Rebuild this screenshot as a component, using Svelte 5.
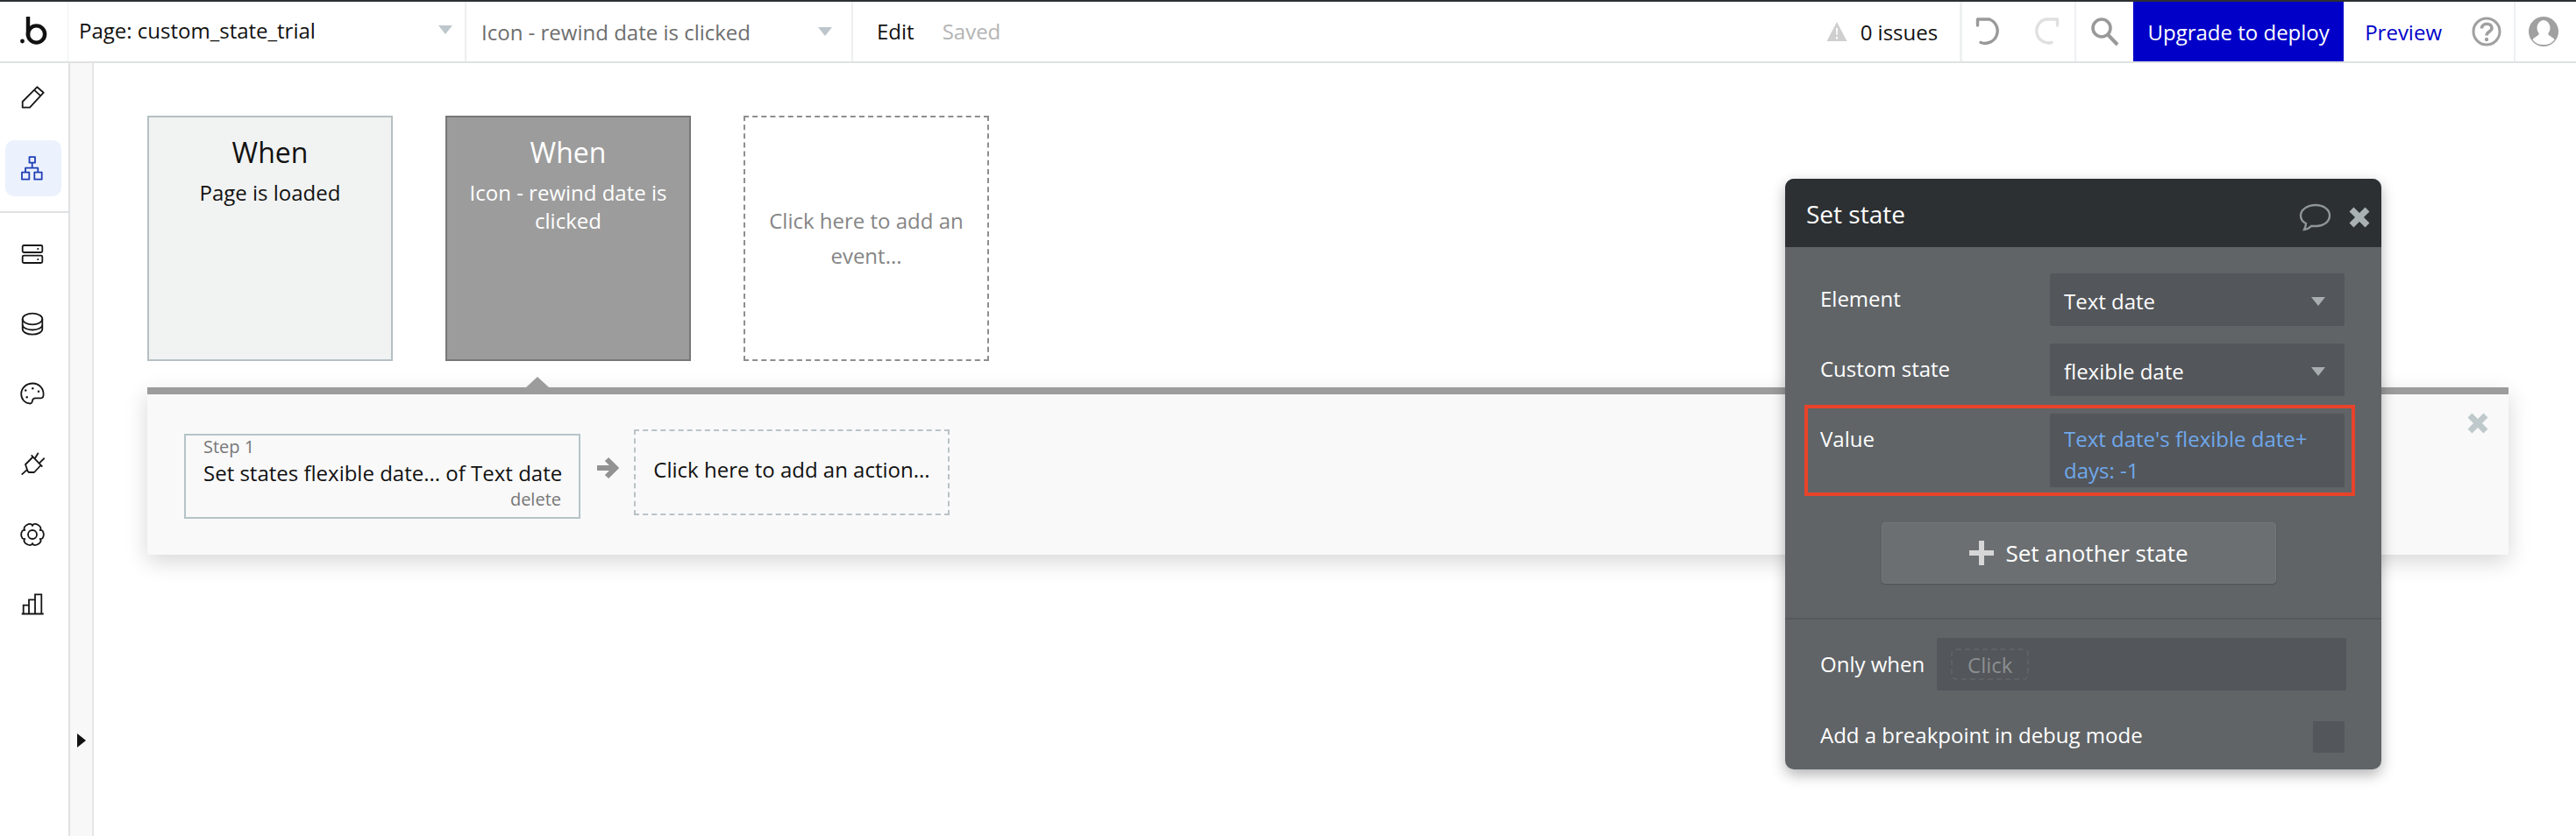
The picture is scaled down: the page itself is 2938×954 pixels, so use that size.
<script>
  const cards = [
    { title: 'When', text: 'Page is loaded', kind: 'plain' },
    { title: 'When', text: 'Icon - rewind date is clicked', kind: 'active' }
  ];
  const fields = [
    { label: 'Element', value: 'Text date' },
    { label: 'Custom state', value: 'flexible date' }
  ];

  // six lobed outline for the settings icon
  function gearPath() {
    const pt = (ang, r) => `${(14 + r * Math.cos(ang)).toFixed(1)} ${(14 + r * Math.sin(ang)).toFixed(1)}`;
    let d = `M${pt(-Math.PI / 6, 10)}`;
    for (let i = 0; i < 6; i++) {
      const a = (i * Math.PI) / 3;
      d += `C${pt(a - 0.42, 15.5)} ${pt(a + 0.42, 15.5)} ${pt(a + Math.PI / 6, 10)}`;
    }
    return d + 'z';
  }
</script>

<div class="app">
  <header class="topbar">
    <div class="logo">
      <svg width="34" height="34" viewBox="0 0 34 34" fill="none">
        <circle cx="3.5" cy="29" r="2.4" fill="#111" />
        <path d="M10 1v22" stroke="#111" stroke-width="4.4" />
        <circle cx="19.5" cy="21" r="9.6" stroke="#111" stroke-width="4.4" />
      </svg>
    </div>
    <div class="drop first">
      <span class="dark">Page: custom_state_trial</span>
      <i class="caret"></i>
    </div>
    <div class="drop second">
      <span>Icon - rewind date is clicked</span>
      <i class="caret"></i>
    </div>
    <div class="edit">
      <span class="dark">Edit</span>
      <span class="saved">Saved</span>
    </div>
    <div class="right">
      <div class="issues">
        <svg width="24" height="24" viewBox="0 0 24 24">
          <path d="M12 1 23.5 23H.5z" fill="#cfcfcf" />
          <path d="M11 8h2l-.3 8h-1.4zM11 18h2v2.5h-2z" fill="#fff" />
        </svg>
        <span class="dark">0 issues</span>
      </div>
      <div class="history">
        <svg width="32" height="34" viewBox="0 0 32 34" fill="none" stroke="#999" stroke-width="3.4">
          <path d="M6 29.5A13.5 13.5 0 1 0 16 3H2.5M2.5 3v7" stroke-linecap="round" />
        </svg>
        <svg width="32" height="34" viewBox="0 0 32 34" fill="none" stroke="#e0e0e0" stroke-width="3.4">
          <path d="M23 29.5A13.5 13.5 0 1 1 16 3h13.5M29.5 3v7" stroke-linecap="round" />
        </svg>
      </div>
      <div class="search">
        <svg width="34" height="36" viewBox="0 0 34 36" fill="none" stroke="#999" stroke-width="3.6">
          <circle cx="13" cy="14" r="10" />
          <path d="m20.5 22 10.5 11" stroke-width="4" />
        </svg>
      </div>
      <div class="upgrade">Upgrade to deploy</div>
      <div class="preview">Preview</div>
      <div class="help">
        <svg width="34" height="34" viewBox="0 0 34 34" fill="none">
          <circle cx="17" cy="17" r="15" stroke="#a0a0a0" stroke-width="3" />
          <path d="M11.5 13.5c0-7 11.5-7 11.5-.5 0 4-6 4-6 8.500" stroke="#a0a0a0" stroke-width="3.6" />
          <circle cx="17" cy="26" r="2.2" fill="#a0a0a0" />
        </svg>
      </div>
      <div class="user">
        <svg width="34" height="34" viewBox="0 0 34 34">
          <circle cx="17" cy="17" r="17" fill="#a0a0a0" />
          <ellipse cx="17" cy="13" rx="7.5" ry="9" fill="#fff" />
          <path d="M12 19c0 3-6 4-7.5 7.5A15.5 15.5 0 0 0 17 32a15.5 15.5 0 0 0 12.5-5.5C28 23 22 22 22 19z" fill="#fff" />
        </svg>
      </div>
    </div>
  </header>

  <div class="main">
    <nav class="sidebar">
      <div class="nav-group">
        <div class="nav-item">
          <svg viewBox="0 0 28 28"><path d="M2.7 25.7V19L19.3 2.3l7.4 6.4L11 25.7zM16 5.7l7.3 6.6" stroke-linejoin="round" /></svg>
        </div>
        <div class="nav-item active">
          <svg viewBox="0 0 28 28"><path d="M10.5 1.2H17v6.500h-6.500zM13.7 7.7v6M6 18.7v-5h14.3v5M2 18.7h8.300v8H2zM16.300 18.7h8.400v8h-8.400z" stroke-linejoin="round" /></svg>
        </div>
      </div>
      <div class="nav-group lower">
        <div class="nav-item">
          <svg viewBox="0 0 28 28"><rect x="2.7" y="4" width="22.6" height="8" rx="1.5" /><rect x="2.7" y="15.7" width="22.6" height="8.3" rx="1.5" /><circle cx="20.3" cy="8" r="1.1" class="dot" /><circle cx="20.3" cy="20" r="1.1" class="dot" /></svg>
        </div>
        <div class="nav-item">
          <svg viewBox="0 0 28 28"><ellipse cx="14" cy="8" rx="11.3" ry="6.3" /><path d="M2.7 8v11.5c0 3.5 5 6.2 11.3 6.2s11.3-2.700 11.3-6.200V8M2.700 14.500c0 3.500 5 6 11.300 6s11.300-2.500 11.300-6" /></svg>
        </div>
        <div class="nav-item">
          <svg viewBox="0 0 28 28"><path d="M14.3 1.5C7 1.5 1.2 6.800 1.2 13.500c0 6 4.300 11 10.300 11 2 0 2.200-1.500 2.400-3 .2-2 1.200-3.200 3.800-3.200h6c2 0 2.900-1.500 2.900-4.300C26.600 7 21.500 1.500 14.300 1.500z" /><circle cx="7.7" cy="17.3" r="1.2" class="dot" /><circle cx="6.2" cy="9.5" r="1.2" class="dot" /><circle cx="14.3" cy="7.3" r="1.2" class="dot" /><circle cx="21" cy="10.7" r="1.2" class="dot" /></svg>
        </div>
        <div class="nav-item">
          <svg viewBox="0 0 28 28"><path d="M1.7 25.7l6.600-6M12.700 3.300l12.600 13.400M16.700 7.300l4-6.600M22 12.300l5.700-5.600M14 6 6 14l2.500 7.500 1.500 1.500h6l7.500-8" stroke-linejoin="round" /></svg>
        </div>
        <div class="nav-item">
          <svg viewBox="0 0 28 28"><path d={gearPath()} stroke-linejoin="round" /><circle cx="14" cy="14" r="5" /></svg>
        </div>
        <div class="nav-item">
          <svg viewBox="0 0 28 28"><path d="M1.7 24.500h25M3.700 24.500v-9.800H10v9.800M10 24.500V8.300h7v16.200M17 24.500V2.300h7.300v22.200" /></svg>
        </div>
      </div>
    </nav>
    <div class="gutter">
      <svg class="gutter-arrow" width="10" height="16" viewBox="0 0 10 16"><path d="M0 0 10 8 0 16z" fill="#111" /></svg>
    </div>

    <div class="canvas">
      <div class="events">
        {#each cards as card}
          <div class="card {card.kind}">
            <div class="card-title">{card.title}</div>
            <div class="card-text">{card.text}</div>
          </div>
        {/each}
        <div class="card add">Click here to add an event...</div>
      </div>

      <section class="actions">
        <i class="pointer"></i>
        <div class="step">
          <div class="step-num">Step 1</div>
          <div class="step-text">Set states flexible date... of Text date</div>
          <div class="step-del">delete</div>
        </div>
        <svg class="arrow" width="28" height="28" viewBox="0 0 28 28"><path d="M3 14h20M14 4l10 10-10 10" fill="none" stroke="#929292" stroke-width="6" /></svg>
        <div class="add-action">Click here to add an action...</div>
        <svg class="bar-close" width="26" height="26" viewBox="0 0 26 26"><path d="m4 4 18 18M22 4 4 22" stroke="#bfc9cc" stroke-width="7" /></svg>
      </section>
    </div>
  </div>

  <aside class="panel">
    <div class="panel-head">
      <span>Set state</span>
      <svg width="38" height="32" viewBox="0 0 38 32" fill="none"><path d="M6 30c3 0 6-2 8-4h6c8 0 15-5 15-12S28 2 19 2 2 7 2 14c0 4 2 7 6 9 0 3-1 5-2 7z" stroke="#8f9698" stroke-width="2.4" /></svg>
      <svg width="26" height="26" viewBox="0 0 26 26"><path d="m4 4 18 18M22 4 4 22" stroke="#a9b1b3" stroke-width="7" /></svg>
    </div>
    <div class="panel-body">
      {#each fields as f}
        <div class="row">
          <label>{f.label}</label>
          <div class="select"><span>{f.value}</span><i class="caret small"></i></div>
        </div>
      {/each}
      <div class="row value-row">
        <label>Value</label>
        <div class="select value"><span>Text date's flexible date+ days: -1</span></div>
      </div>
      <button class="another">
        <svg width="28" height="28" viewBox="0 0 28 28"><path d="M14 0v28M0 14h28" stroke="#d6d6d6" stroke-width="6" /></svg>
        Set another state
      </button>
    </div>
    <div class="panel-foot">
      <div class="when">
        <label>Only when</label>
        <div class="cond"><span class="chip">Click</span></div>
      </div>
      <div class="breakpoint">
        <label>Add a breakpoint in debug mode</label>
        <i class="check"></i>
      </div>
    </div>
  </aside>
</div>

<style>
  :global(body) {
    margin: 0;
    background: #fff;
    overflow: hidden;
  }

  .app {
    position: relative;
    width: 2938px;
    height: 954px;
    font-family: "Open Sans", sans-serif;
    font-size: 24px;
    color: #6e6e6e;
    overflow: hidden;
  }

  .dark { color: #111; }

  /* top bar */
  .topbar {
    display: flex;
    height: 68px;
    border-top: 2px solid #2d3033;
    border-bottom: 2px solid #dfe1e2;
    background: #fff;
    align-items: stretch;
  }
  .logo {
    width: 78px;
    display: flex;
    align-items: center;
    justify-content: center;
    padding-bottom: 2px;
    box-sizing: border-box;
    border-right: 1px solid #eceeef;
  }
  .drop {
    display: flex;
    align-items: center;
    justify-content: space-between;
    box-sizing: border-box;
    border-right: 2px solid #eceeef;
  }
  .drop.first { width: 454px; padding: 0 14px 4px 12px; }
  .drop.second { width: 441px; padding: 0 22px 0 17px; }
  .caret {
    display: block;
    width: 0;
    height: 0;
    border-left: 8px solid transparent;
    border-right: 8px solid transparent;
    border-top: 10px solid #bcc6cb;
  }
  .edit {
    display: flex;
    align-items: center;
    gap: 32px;
    padding-left: 27px;
    padding-bottom: 2px;
  }
  .saved { color: #b4b4b4; }
  .right {
    margin-left: auto;
    display: flex;
    align-items: stretch;
  }
  .issues {
    display: flex;
    align-items: center;
    gap: 15px;
    padding-right: 25px;
    border-right: 3px solid #eef0f2;
  }
  .history {
    display: flex;
    align-items: center;
    gap: 32px;
    padding: 0 15px;
    border-right: 2px solid #eef0f2;
    width: 130px;
    box-sizing: border-box;
  }
  .search {
    display: flex;
    align-items: center;
    justify-content: center;
    width: 65px;
  }
  .upgrade {
    display: flex;
    align-items: center;
    width: 240px;
    justify-content: center;
    background: #0000c8;
    color: #fff;
  }
  .preview {
    display: flex;
    align-items: center;
    color: #0000c8;
    padding: 0 34px 0 24px;
  }
  .help {
    display: flex;
    align-items: center;
    padding-right: 14px;
    border-right: 2px solid #eef0f2;
  }
  .user {
    display: flex;
    align-items: center;
    padding: 0 20px 0 15px;
  }

  /* main area */
  .main {
    display: flex;
    height: 882px;
  }
  .sidebar {
    flex: none;
    box-sizing: border-box;
    border-right: 2px solid #dfe1e2;
    width: 80px;
  }
  .nav-group {
    display: flex;
    flex-direction: column;
    padding: 0 8px 0 6px;
  }
  .nav-group:first-child {
    padding-top: 7px;
    padding-bottom: 17px;
    gap: 17px;
  }
  .nav-group.lower {
    border-top: 2px solid #dfe1e2;
    padding-top: 7px;
  }
  .nav-item {
    height: 80px;
    display: flex;
    align-items: center;
    justify-content: center;
  }
  .nav-group:first-child .nav-item { height: 64px; }
  .nav-item svg {
    width: 28px;
    height: 28px;
    fill: none;
    stroke: #161616;
    stroke-width: 1.8;
    margin-left: -2px;
  }
  .nav-item .dot {
    fill: #161616;
    stroke: none;
  }
  .nav-item.active {
    background: #ebf1fd;
    border-radius: 10px;
  }
  .nav-item.active svg { stroke: #1f3fb5; }

  .gutter {
    position: relative;
    width: 25px;
    flex: none;
    background: #f8f8f8;
    border-right: 2px solid #e6e6e6;
  }
  .gutter-arrow {
    position: absolute;
    left: 8px;
    top: 765px;
  }

  .canvas {
    flex: 1;
    min-width: 0;
    padding: 60px 77px 0 61px;
  }
  .events {
    display: flex;
    gap: 60px;
  }
  .card {
    box-sizing: border-box;
    width: 280px;
    height: 280px;
    text-align: center;
    line-height: 32px;
    padding: 0 20px;
  }
  .card.plain {
    background: #f1f3f2;
    border: 2px solid #b5c0c4;
    color: #111;
  }
  .card.active {
    background: #9c9c9c;
    border: 2px solid #777;
    color: #fff;
  }
  .card-title {
    font-size: 32px;
    margin-top: 20px;
    line-height: 40px;
  }
  .card-text { margin-top: 10px; }
  .card.add {
    border: 2px dashed #8e8e8e;
    display: flex;
    align-items: center;
    justify-content: center;
    color: #858585;
    line-height: 40px;
  }

  .actions {
    position: relative;
    margin-top: 30px;
    height: 191px;
    box-sizing: border-box;
    background: #f9f9f9;
    border-top: 8px solid #9c9c9c;
    box-shadow: 0 8px 24px rgba(0, 0, 0, 0.16);
    display: flex;
    align-items: flex-start;
    padding: 40px 0 0 42px;
  }
  .pointer {
    position: absolute;
    left: 432px;
    top: -20px;
    width: 0;
    height: 0;
    border-left: 13px solid transparent;
    border-right: 13px solid transparent;
    border-bottom: 12px solid #9c9c9c;
  }
  .step {
    box-sizing: border-box;
    width: 452px;
    height: 97px;
    margin-top: 5px;
    border: 2px solid #b5c4c8;
    padding: 0 20px;
    color: #111;
  }
  .step-num {
    font-size: 20px;
    line-height: 26px;
    color: #777;
  }
  .step-text {
    line-height: 34px;
    white-space: nowrap;
  }
  .step-del {
    font-size: 20px;
    text-align: right;
    color: #777;
    line-height: 26px;
  }
  .arrow {
    margin: 30px 0 0 16px;
  }
  .add-action {
    box-sizing: border-box;
    width: 360px;
    height: 98px;
    margin-left: 17px;
    border: 2px dashed #b9c3c7;
    color: #111;
    display: flex;
    align-items: center;
    justify-content: center;
    padding-bottom: 8px;
  }
  .bar-close {
    position: absolute;
    right: 22px;
    top: 20px;
  }

  /* floating panel */
  .panel {
    position: absolute;
    left: 2036px;
    top: 204px;
    width: 680px;
    height: 674px;
    border-radius: 10px;
    overflow: hidden;
    background: #606467;
    box-shadow: 0 6px 16px rgba(0, 0, 0, 0.3);
    color: #fff;
  }
  .panel-head {
    height: 78px;
    box-sizing: border-box;
    background: #2c3033;
    display: flex;
    align-items: center;
    padding: 2px 12px 0 24px;
    gap: 18px;
    font-size: 28px;
  }
  .panel-head span { margin-right: auto; }
  .panel-head svg { margin-top: 8px; }
  .panel-body {
    padding: 30px 42px 0 40px;
    height: 425px;
    box-sizing: border-box;
    border-bottom: 2px solid #565a5d;
  }
  .row {
    display: flex;
    justify-content: space-between;
    margin-bottom: 20px;
  }
  .row label { padding-top: 12px; }
  .select {
    position: relative;
    box-sizing: border-box;
    width: 336px;
    min-height: 60px;
    background: #53565a;
    border-radius: 2px;
    display: flex;
    align-items: center;
    justify-content: space-between;
    padding: 4px 22px 0 16px;
    line-height: 36px;
  }
  .caret.small { border-top-color: #a8aeb0; }
  .select.value {
    color: #6fa8ec;
    height: 84px;
    padding: 11px 16px 0;
    line-height: 36px;
    align-items: flex-start;
  }
  .value-row { position: relative; }
  .value-row::before {
    content: "";
    position: absolute;
    left: -18px;
    right: -12px;
    top: -10px;
    bottom: -10px;
    border: 4px solid #e8432a;
    pointer-events: none;
  }
  .another {
    display: flex;
    align-items: center;
    justify-content: center;
    gap: 13px;
    box-sizing: border-box;
    width: 450px;
    height: 70px;
    margin: 40px 0 0 70px;
    background: #6b6f72;
    border: 1px solid #74787b;
    border-radius: 4px;
    color: #fff;
    font: inherit;
    font-size: 26px;
    box-shadow: 0 1px 2px rgba(0, 0, 0, 0.2);
  }
  .panel-foot { padding: 21px 40px 0 40px; }
  .when {
    display: flex;
    align-items: center;
    gap: 14px;
  }
  .when label { padding-bottom: 2px; }
  .cond {
    flex: 1;
    height: 60px;
    background: #53565a;
    border-radius: 2px;
    display: flex;
    align-items: center;
    padding-left: 16px;
  }
  .chip {
    box-sizing: border-box;
    height: 36px;
    width: 89px;
    border: 2px dashed #5e6265;
    border-radius: 6px;
    color: #8c8f91;
    display: flex;
    align-items: center;
    justify-content: center;
  }
  .breakpoint {
    display: flex;
    align-items: center;
    justify-content: space-between;
    margin-top: 34px;
    padding-right: 2px;
  }
  .breakpoint label { padding-bottom: 4px; }
  .check {
    display: block;
    width: 36px;
    height: 36px;
    background: #53565a;
    border-radius: 2px;
  }
</style>
